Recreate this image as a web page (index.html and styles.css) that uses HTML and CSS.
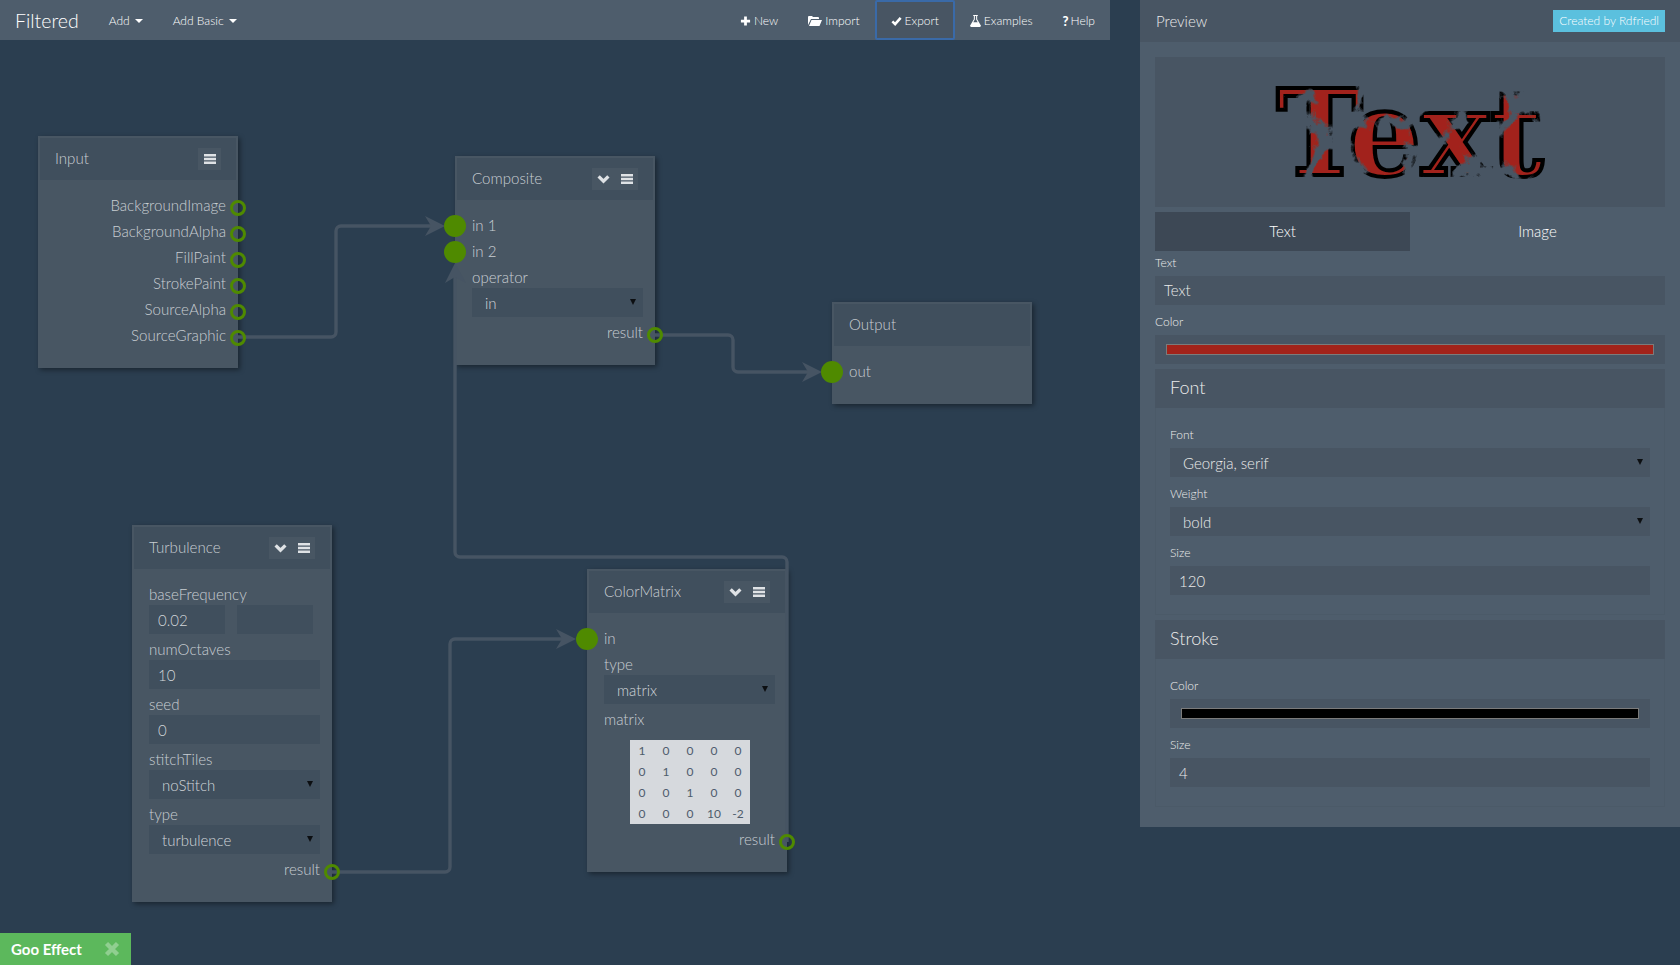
FILE: index.html
```html
<!DOCTYPE html>
<html lang="en">
<head>
<meta charset="utf-8">
<title>Filtered</title>
<link rel="stylesheet" href="styles.css">
</head>
<body>
<div class="app">
  <main class="main">
    <nav class="navbar">
      <a class="brand">Filtered</a>
      <a class="nav-item">Add<span class="caret"></span></a>
      <a class="nav-item">Add Basic<span class="caret"></span></a>
      <span class="spacer"></span>
      <a class="nav-item"><svg class="ico" viewBox="0 0 12 12"><path d="M6 1v10M1 6h10" stroke="#fff" stroke-width="3" fill="none"/></svg>New</a>
      <a class="nav-item"><svg class="ico ico-wide" viewBox="0 0 14 12"><path d="M0 10V2a1 1 0 0 1 1-1h3l1 1h5a1 1 0 0 1 1 1v1H3L0 10zM3.5 5H14l-2.5 6H1z" fill="#fff"/></svg>Import</a>
      <a class="nav-item nav-active"><svg class="ico" viewBox="0 0 12 12"><path d="M1.5 6.5L4.5 9.5L10.5 2.5" stroke="#fff" stroke-width="2.8" fill="none"/></svg>Export</a>
      <a class="nav-item"><svg class="ico" viewBox="0 0 12 13"><path d="M3.5 0h5v1h-.7v3.5L11.7 11a1.3 1.3 0 0 1-1.1 2H1.4a1.3 1.3 0 0 1-1.1-2L4.2 4.5V1h-.7zM5.3 1v3.8L3.6 7.8h4.8L6.7 4.8V1z" fill="#fff" fill-rule="evenodd"/></svg>Examples</a>
      <a class="nav-item"><span class="qmark">?</span>Help</a>
    </nav>

    <section class="node node-input">
      <header class="node-head"><span>Input</span>
        <div class="btns"><span class="btn"><svg class="bars" viewBox="0 0 12 10"><path d="M0 0h12v2.4H0zM0 3.8h12v2.4H0zM0 7.6h12V10H0z"/></svg></span></div>
      </header>
      <div class="node-body">
        <div class="row right">BackgroundImage<i class="port-out"></i></div>
        <div class="row right">BackgroundAlpha<i class="port-out"></i></div>
        <div class="row right">FillPaint<i class="port-out"></i></div>
        <div class="row right">StrokePaint<i class="port-out"></i></div>
        <div class="row right">SourceAlpha<i class="port-out"></i></div>
        <div class="row right">SourceGraphic<i class="port-out"></i></div>
      </div>
    </section>

    <section class="node node-composite">
      <header class="node-head"><span>Composite</span>
        <div class="btns"><span class="btn"><svg class="chev" viewBox="0 0 12 9"><path d="M1.5 2L6 6.5L10.5 2" fill="none" stroke-width="3"/></svg></span><span class="btn"><svg class="bars" viewBox="0 0 12 10"><path d="M0 0h12v2.4H0zM0 3.8h12v2.4H0zM0 7.6h12V10H0z"/></svg></span></div>
      </header>
      <div class="node-body">
        <div class="row"><i class="port-in"></i>in 1</div>
        <div class="row"><i class="port-in"></i>in 2</div>
        <div class="label">operator</div>
        <div class="ctl sel">in</div>
        <div class="row right">result<i class="port-out"></i></div>
      </div>
    </section>

    <section class="node node-output">
      <header class="node-head"><span>Output</span></header>
      <div class="node-body">
        <div class="row"><i class="port-in"></i>out</div>
      </div>
    </section>

    <section class="node node-turbulence">
      <header class="node-head"><span>Turbulence</span>
        <div class="btns"><span class="btn"><svg class="chev" viewBox="0 0 12 9"><path d="M1.5 2L6 6.5L10.5 2" fill="none" stroke-width="3"/></svg></span><span class="btn"><svg class="bars" viewBox="0 0 12 10"><path d="M0 0h12v2.4H0zM0 3.8h12v2.4H0zM0 7.6h12V10H0z"/></svg></span></div>
      </header>
      <div class="node-body">
        <div class="label">baseFrequency</div>
        <div class="pair"><div class="ctl">0.02</div><div class="ctl"></div></div>
        <div class="label">numOctaves</div>
        <div class="ctl">10</div>
        <div class="label">seed</div>
        <div class="ctl">0</div>
        <div class="label">stitchTiles</div>
        <div class="ctl sel">noStitch</div>
        <div class="label">type</div>
        <div class="ctl sel">turbulence</div>
        <div class="row right">result<i class="port-out"></i></div>
      </div>
    </section>

    <section class="node node-matrix">
      <header class="node-head"><span>ColorMatrix</span>
        <div class="btns"><span class="btn"><svg class="chev" viewBox="0 0 12 9"><path d="M1.5 2L6 6.5L10.5 2" fill="none" stroke-width="3"/></svg></span><span class="btn"><svg class="bars" viewBox="0 0 12 10"><path d="M0 0h12v2.4H0zM0 3.8h12v2.4H0zM0 7.6h12V10H0z"/></svg></span></div>
      </header>
      <div class="node-body">
        <div class="row"><i class="port-in"></i>in</div>
        <div class="label">type</div>
        <div class="ctl sel">matrix</div>
        <div class="label">matrix</div>
        <table class="matrix">
          <tr><td>1</td><td>0</td><td>0</td><td>0</td><td>0</td></tr>
          <tr><td>0</td><td>1</td><td>0</td><td>0</td><td>0</td></tr>
          <tr><td>0</td><td>0</td><td>1</td><td>0</td><td>0</td></tr>
          <tr><td>0</td><td>0</td><td>0</td><td>10</td><td>-2</td></tr>
        </table>
        <div class="row right">result<i class="port-out"></i></div>
      </div>
    </section>

    <svg class="wires" viewBox="0 0 1110 965">
      <g class="wire">
        <path d="M238 337H331a5 5 0 0 0 5-5V231a5 5 0 0 1 5-5H440"/>
        <path d="M787 842V562a5 5 0 0 0-5-5H460a5 5 0 0 1-5-5V270"/>
        <path d="M655 335H728a5 5 0 0 1 5 5V367a5 5 0 0 0 5 5H816"/>
        <path d="M332 872H445a5 5 0 0 0 5-5V644a5 5 0 0 1 5-5H570"/>
      </g>
      <g class="heads">
        <path d="M425 216L445 226L425 236L431 226z"/>
        <path d="M445 283L455 263L466 283L455 277z"/>
        <path d="M802 362L822 372L802 382L808 372z"/>
        <path d="M556 629L576 639L556 649L562 639z"/>
      </g>
    </svg>
  </main>

  <aside class="side">
    <header class="side-head"><span>Preview</span><a class="badge">Created by Rdfriedl</a></header>
    <div class="side-body">
      <div class="preview">
        <svg class="preview-svg" viewBox="0 0 510 150">
          <defs>
            <filter id="goo" x="-100" y="-100" width="900" height="500" filterUnits="userSpaceOnUse">
              <feTurbulence baseFrequency="0.02" numOctaves="10" seed="0" type="turbulence" stitchTiles="noStitch" result="noise"/>
              <feColorMatrix in="noise" type="matrix" values="1 0 0 0 0 0 1 0 0 0 0 0 1 0 0 0 0 0 10 -2" result="mask"/>
              <feComposite in="SourceGraphic" in2="mask" operator="in"/>
            </filter>
          </defs>
          <g transform="translate(-45 -35)" filter="url(#goo)">
            <text class="preview-text" transform="scale(1.07 1)" x="280.4" y="153" text-anchor="middle">Text</text>
          </g>
        </svg>
      </div>
      <div class="tabs"><a class="tab tab-active">Text</a><a class="tab">Image</a></div>
      <div class="top-fields">
        <label class="f-label">Text</label>
        <div class="f-ctl">Text</div>
        <label class="f-label">Color</label>
        <div class="f-ctl swatch-wrap"><span class="swatch swatch-red"></span></div>
      </div>
      <section class="group">
        <h3 class="group-head">Font</h3>
        <div class="group-body">
          <label class="f-label">Font</label>
          <div class="f-ctl sel">Georgia, serif</div>
          <label class="f-label">Weight</label>
          <div class="f-ctl sel">bold</div>
          <label class="f-label">Size</label>
          <div class="f-ctl f-num">120</div>
        </div>
      </section>
      <section class="group">
        <h3 class="group-head">Stroke</h3>
        <div class="group-body">
          <label class="f-label">Color</label>
          <div class="f-ctl swatch-wrap"><span class="swatch swatch-black"></span></div>
          <label class="f-label">Size</label>
          <div class="f-ctl f-num">4</div>
        </div>
      </section>
    </div>
  </aside>
</div>
<div class="toast"><span>Goo Effect</span><svg class="toast-x" viewBox="0 0 16 16"><path d="M2.5 2.5l11 11M13.5 2.5l-11 11" stroke="#fff" stroke-opacity=".32" stroke-width="4.4" fill="none"/></svg></div>
</body>
</html>
```

FILE: styles.css
```css
* { box-sizing: border-box; }
html, body { margin: 0; height: 100%; }
body {
  background: #2b3e50;
  color: #ebebeb;
  font: 300 15px/20px Lato, "Liberation Sans", sans-serif;
  overflow: hidden;
}
.app { display: flex; align-items: flex-start; gap: 30px; height: 965px; }
.main { position: relative; width: 1110px; height: 965px; flex: none; }

/* navbar */
.navbar { display: flex; align-items: stretch; height: 40px; background: #4e5d6c; }
.brand { padding: 0 15px; font-size: 19.5px; line-height: 42px; color: #fff; }
.nav-item { display: flex; align-items: center; padding: 1px 15px 0; font-size: 12px; font-weight: 300; color: #fff; }
.spacer { flex: 1; }
.nav-active { background: #485563; border: 2px solid #3a6aa8; border-radius: 2px; padding: 1px 14px 0 14px; }
.caret { width: 0; height: 0; margin-left: 5px; border-top: 4px solid #fff; border-left: 4px solid transparent; border-right: 4px solid transparent; }
.ico { width: 11px; height: 12px; margin-right: 3px; flex: none; }
.ico-wide { width: 14px; margin-right: 3px; }
.qmark { font-weight: 900; font-size: 13px; color: #fff; margin-right: 2px; }

/* nodes */
.node { position: absolute; width: 200px; padding: 2px 2px 0; background: #485663; box-shadow: 2px 2px 5px rgba(0,0,0,.4); color: #c9ced3; }
.node-input { left: 38px; top: 136px; height: 232px; }
.node-composite { left: 455px; top: 156px; height: 209px; }
.node-output { left: 832px; top: 302px; height: 102px; }
.node-turbulence { left: 132px; top: 525px; height: 377px; }
.node-matrix { left: 587px; top: 569px; height: 303px; }
.node-head { display: flex; align-items: center; justify-content: space-between; height: 42px; padding: 0 15px 2px; background: #404f5d; font-size: 15.1px; }
.btns { display: flex; height: 22px; background: #485663; margin-top: 2px; }
.btn { display: flex; align-items: center; justify-content: center; width: 23px; height: 22px; }
.bars { width: 12px; height: 10px; fill: #dfe2e5; }
.chev { width: 13px; height: 10px; stroke: #dfe2e5; }
.node-body { padding: 16px 10px 0 15px; font-size: 15.1px; }
.row { position: relative; height: 20px; margin-bottom: 6px; line-height: 18px; }
.right { text-align: right; }
.label { height: 20px; line-height: 18px; }
.ctl { position: relative; height: 29px; margin-bottom: 6px; padding-left: 9px; background: #404f5d; line-height: 30px; font-size: 15px; color: #d2d6da; }
.pair { display: flex; gap: 12px; }
.pair .ctl { width: 76px; }
.sel { padding-left: 13px; }
.sel::after { content: ""; position: absolute; right: 7px; top: 11px; border-top: 6px solid #0c0f12; border-left: 3px solid transparent; border-right: 3px solid transparent; }
.port-in, .port-out { position: absolute; z-index: 3; border-radius: 50%; }
.port-in { left: -28px; top: -1px; width: 22px; height: 22px; background: #4f8a00; }
.port-out { right: -20px; top: 4px; width: 16px; height: 16px; border: 3px solid #4f8a00; }
.matrix { width: 120px; height: 84px; margin: 10px 0 6px 26px; border-collapse: collapse; table-layout: fixed; background: #d6d9dd; color: #4e5d6c; font-size: 12px; font-weight: 400; line-height: 15px; }
.matrix td { width: 24px; height: 21px; padding: 0; text-align: center; }

/* wires */
.wires { position: absolute; left: 0; top: 0; width: 1110px; height: 965px; z-index: 2; pointer-events: none; }
.wire path { fill: none; stroke: #465463; stroke-width: 3.4; }
.heads path { fill: #465463; }

/* side */
.side { width: 540px; height: 827px; flex: none; background: #4e5d6c; }
.side-head { display: flex; align-items: center; justify-content: space-between; height: 42px; padding: 0 15px 0 16px; background: #485563; font-size: 15px; color: #ebebeb; }
.badge { display: block; height: 22px; padding: 0 6px; background: #5bc0de; color: #fff; font-size: 12px; font-weight: 300; line-height: 22px; }
.side-body { padding: 15px; }
.preview { height: 150px; background: #485563; }
.preview-svg { display: block; width: 510px; height: 150px; }
.preview-text { font-family: "DejaVu Serif Condensed", "DejaVu Serif", serif; font-weight: 700; font-size: 120px; fill: #a2231a; stroke: #000; stroke-width: 4px; }
.tabs { display: flex; margin-top: 5px; }
.tab { flex: 1; height: 39px; text-align: center; line-height: 39px; font-size: 15px; color: #fff; }
.tab-active { background: #3d4855; }
.top-fields { padding-top: 3px; }
.f-label { display: block; height: 18px; margin-bottom: 4px; font-size: 12px; font-weight: 300; line-height: 18px; color: #ebebeb; }
.f-ctl { position: relative; height: 29px; margin-bottom: 8px; padding-left: 9px; background: #485563; font-size: 15px; line-height: 29px; color: #ebebeb; }
.f-ctl.sel { padding-left: 13px; line-height: 31px; }
.f-ctl.f-num { line-height: 31px; }
.top-fields .f-ctl:last-child { margin-bottom: 5px; }
.swatch-wrap { padding: 9px 11px; }
.swatch { display: block; height: 11px; border: 1px solid #7b7b7b; }
.swatch-red { background: #a2231a; }
.swatch-black { background: #000; }
.group { margin-bottom: 5px; }
.group-head { margin: 0; height: 39px; padding-left: 15px; background: #485563; font-size: 18px; font-weight: 300; line-height: 37px; color: #ebebeb; }
.group-body { padding: 18px 14px 11px; border: 1px solid #4b5a68; border-top: 0; }

/* toast */
.toast { position: fixed; left: 0; bottom: 0; display: flex; align-items: center; justify-content: space-between; width: 131px; height: 32px; padding: 0 11px; background: #5cb85c; color: #fff; font-size: 15px; font-weight: 700; }
.toast-x { width: 16px; height: 16px; }
```
